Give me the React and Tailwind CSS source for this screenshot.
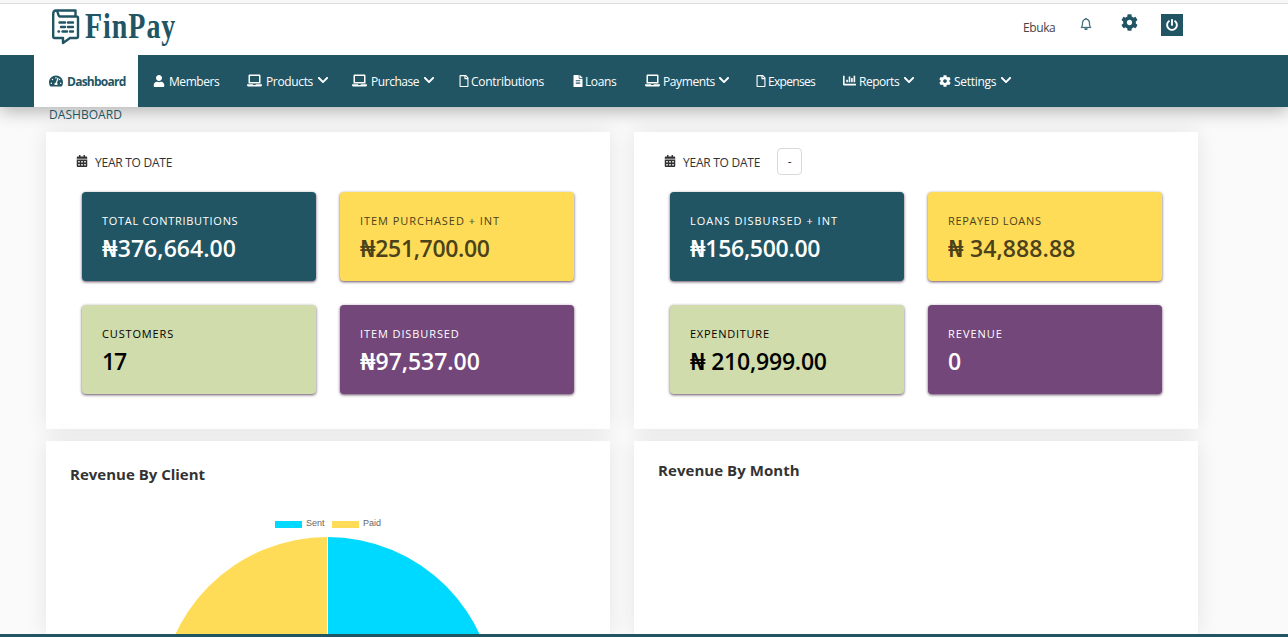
import React from "react";
import {
  FaTachometerAlt, FaUser, FaLaptop, FaRegFile, FaFileAlt, FaChartBar,
  FaCog, FaChevronDown, FaPowerOff, FaCalendarAlt,
} from "react-icons/fa";
import { BsBell } from "react-icons/bs";

const nav = [
  { label: "Members", icon: FaUser, w: "w-[94px]", iw: "w-4", tr: "tracking-[-0.45px]", size: 12 },
  { label: "Products", icon: FaLaptop, w: "w-[105px]", iw: "w-[19px]", tr: "tracking-[-0.35px]", size: 15, menu: true },
  { label: "Purchase", icon: FaLaptop, w: "w-[106px]", iw: "w-[19px]", tr: "tracking-[-0.45px]", size: 15, menu: true },
  { label: "Contributions", icon: FaRegFile, w: "w-[114px]", iw: "w-[13px]", tr: "tracking-[-0.28px]", size: 12 },
  { label: "Loans", icon: FaFileAlt, w: "w-[73px]", iw: "w-[13px]", tr: "tracking-[-0.4px]", size: 12 },
  { label: "Payments", icon: FaLaptop, w: "w-[110px]", iw: "w-[18px]", tr: "tracking-[-0.4px]", size: 15, menu: true },
  { label: "Expenses", icon: FaRegFile, w: "w-[88px]", iw: "w-[13px]", tr: "tracking-[-0.7px]", size: 12 },
  { label: "Reports", icon: FaChartBar, w: "w-[96px]", iw: "w-4", tr: "tracking-[-0.5px]", size: 13, menu: true },
  { label: "Settings", icon: FaCog, w: "w-[100px]", iw: "w-[15px]", tr: "tracking-[-0.3px]", size: 12, menu: true },
];

function Logo() {
  return (
    <svg width="28" height="36" viewBox="0 0 28 36" fill="none" stroke="#215564" strokeWidth="2.4" className="ml-px shrink-0">
      <path d="M4 1.500H23.500V7.500H8C5.500 7.500 6.500 1.500 4 1.500C2.200 1.500 1.200 2.800 1.200 5V27.500Q1.200 29 2.700 29H11V34L18 29H24.500Q26 29 26 27.500V9Q26 7.500 24.500 7.500H23.500" strokeLinejoin="round" />
      <path d="M7.500 13.500H13M16 13.500H21M9 18H13M16 18H21M6.500 22.500H7M10.500 22.500H15M18 22.500H21" strokeLinecap="round" />
    </svg>
  );
}

const tones = {
  teal: "bg-[#215564] text-white",
  yellow: "bg-[#ffdc58] text-[#4b421b]",
  green: "bg-[#d0dcac] text-black",
  purple: "bg-[#74477b] text-white",
};

function Stat({ tone, label, value, naira, lt, vt }) {
  return (
    <div className={`h-[89px] w-[234px] rounded pl-5 pt-[19px] shadow-[0_1px_3px_rgba(50,20,50,0.75)] ${tones[tone]}`}>
      <div className={`h-5 text-[11px] leading-5 whitespace-nowrap ${lt}`}>{label}</div>
      <div className={`-mt-px text-[23px] leading-9 font-semibold whitespace-pre ${vt}`}>
        {naira && <span className="mr-[2.5px] inline-block origin-left scale-x-[1.18]">₦</span>}
        {value}
      </div>
    </div>
  );
}

function Summary({ stats, button }) {
  return (
    <section className="h-[297px] w-[564px] bg-white pl-[30px] pt-[15px] shadow-[0_0_20px_rgba(0,0,0,0.09)]">
      <div className="flex h-7 items-center text-[12px] text-[#333]">
        <FaCalendarAlt size={12} className="mr-[7px]" />
        <span className="mt-1 tracking-[-0.25px]">YEAR TO DATE</span>
        {button && <button className="ml-[17px] mt-px h-[27px] w-[25px] rounded-sm border border-[#d9d9d9] text-[12px]">-</button>}
      </div>
      <div className="ml-[6px] mt-[17px] grid w-[492px] grid-cols-[234px_234px] gap-6">
        {stats.map((s) => <Stat key={s.label} {...s} />)}
      </div>
    </section>
  );
}

export default function App() {
  return (
    <div className="flex h-[637px] w-[1288px] flex-col overflow-hidden bg-[#fafafa] font-['Open_Sans','Noto_Sans',sans-serif] text-[12px]">
      <div className="relative z-20 h-1 shrink-0 border-b border-[#dedede] bg-[#f8f8f8]" />
      <header className="relative z-20 flex h-[51px] shrink-0 items-start bg-white pl-[51px]">
        <div className="flex w-[972px] pt-[5px]">
          <Logo />
          <span className="ml-[5px] origin-left scale-x-[0.8] font-['Liberation_Serif',serif] text-[35px] leading-[36px] font-bold tracking-[1.2px] text-[#215564]">FinPay</span>
        </div>
        <span className="mt-[15px] w-[57px] leading-[18px] tracking-[-0.4px] text-[#444]">Ebuka</span>
        <BsBell size={12} strokeWidth={0.4} className="mr-[29px] mt-[14px] text-[#215564]" />
        <FaCog size={17} className="mt-[10px] text-[#215564]" />
        <div className="ml-[23px] mt-[10px] flex size-[22px] items-center justify-center bg-[#215564] text-white"><FaPowerOff size={12} /></div>
      </header>
      <nav className="relative z-10 flex h-[52px] shrink-0 bg-[#215564] pl-[34px] text-white shadow-[0_4px_18px_rgba(0,0,0,0.3)]">
        <div className="flex w-[104px] items-center bg-white pl-[15px] text-[#215564]">
          <span className="w-[18px] shrink-0"><FaTachometerAlt size={14} /></span>
          <span className="mt-0.5 font-bold tracking-[-0.75px]">Dashboard</span>
        </div>
        {nav.map(({ label, icon: Icon, w, iw, tr, size, menu }) => (
          <div key={label} className={`flex shrink-0 items-center pl-[15px] ${w}`}>
            <span className={`shrink-0 ${iw}`}><Icon size={size} className="-ml-[0.5px] -mt-px" /></span>
            <span className={`mt-0.5 ${tr}`}>{label}</span>
            {menu && <FaChevronDown size={12} className="-mt-0.5 ml-[3.5px] shrink-0" />}
          </div>
        ))}
      </nav>
      <div className="relative z-20 h-[25px] shrink-0 pl-[49px] leading-4 tracking-[0.05px] text-[#215564]">DASHBOARD</div>
      <main className="grid h-[502px] shrink-0 grid-cols-[564px_564px] grid-rows-[297px_193px] gap-x-6 gap-y-3 pl-[46px]">
        <Summary stats={[
          { tone: "teal", label: "TOTAL CONTRIBUTIONS", naira: true, value: "376,664.00", lt: "tracking-[0.7px]", vt: "tracking-[0.05px]" },
          { tone: "yellow", label: "ITEM PURCHASED + INT", naira: true, value: "251,700.00", lt: "tracking-[0.95px]", vt: "tracking-[-0.35px]" },
          { tone: "green", label: "CUSTOMERS", value: "17", lt: "tracking-[0.85px]", vt: "tracking-[-1.2px]" },
          { tone: "purple", label: "ITEM DISBURSED", naira: true, value: "97,537.00", lt: "tracking-[0.9px]", vt: "tracking-[-0.05px]" },
        ]} />
        <Summary button stats={[
          { tone: "teal", label: "LOANS DISBURSED + INT", naira: true, value: "156,500.00", lt: "tracking-[1px]", vt: "tracking-[-0.3px]" },
          { tone: "yellow", label: "REPAYED LOANS", naira: true, value: " 34,888.88", lt: "tracking-[0.65px]", vt: "tracking-[0.12px]" },
          { tone: "green", label: "EXPENDITURE", naira: true, value: " 210,999.00", lt: "tracking-[0.75px]", vt: "tracking-[-0.22px]" },
          { tone: "purple", label: "REVENUE", value: "0", lt: "tracking-[1px]", vt: "tracking-[0px]" },
        ]} />
        <section className="overflow-hidden bg-white pt-[22px] shadow-[0_0_20px_rgba(0,0,0,0.09)]">
          <h2 className="pl-6 text-[15px] leading-[22px] font-bold text-[#333]">Revenue By Client</h2>
          <div className="mt-[33px] flex h-[10px] items-center pl-[229px] font-['Liberation_Sans',sans-serif] text-[9px] leading-[10px] text-[#666]">
            <span className="mt-0.5 h-[7px] w-[27px] bg-[#00d9ff]" /><span className="ml-1 w-[26px]">Sent</span>
            <span className="mt-0.5 h-[7px] w-[27px] bg-[#ffdc58]" /><span className="ml-1">Paid</span>
          </div>
          <svg width="564" height="97" viewBox="0 0 564 97" className="mt-[9px] block">
            <path d="M281.500 0A167.600 167.600 0 0 0 281.500 335.200Z" fill="#ffdc58" />
            <path d="M281.500 0A167.600 167.600 0 0 1 281.500 335.200Z" fill="#00d9ff" />
            <path d="M281.500 0V97" stroke="white" strokeWidth="1" />
          </svg>
        </section>
        <section className="bg-white pt-[18px] shadow-[0_0_20px_rgba(0,0,0,0.09)]">
          <h2 className="pl-6 text-[15px] leading-[22px] font-bold tracking-[0.06px] text-[#333]">Revenue By Month</h2>
        </section>
      </main>
      <footer className="relative h-[3px] shrink-0 bg-[#215564]" />
    </div>
  );
}
